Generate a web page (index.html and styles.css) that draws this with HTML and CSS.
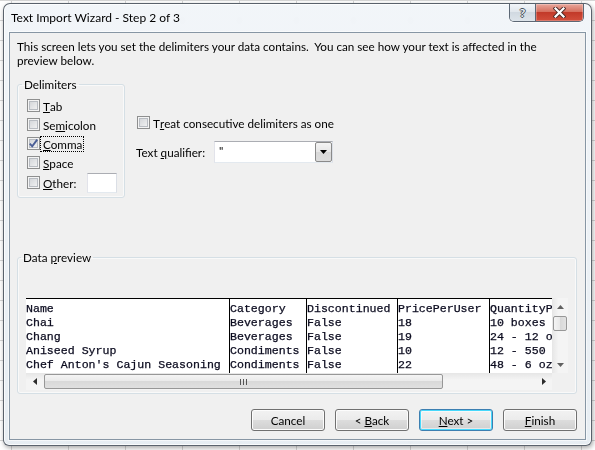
FILE: index.html
```html
<!DOCTYPE html>
<html lang="en">
<head>
  <meta charset="UTF-8" />
  <title>Text Import Wizard - Step 2 of 3</title>
  <link rel="stylesheet" href="styles.css">
</head>
<body>

  <!-- WINDOW -->
  <div class="window">
    <div class="titlebar">
      <span class="title">Text Import Wizard - Step 2 of 3</span>
      <div class="caption-btns">
        <button class="cap-help">?</button>
        <button class="cap-close">
          <svg width="13" height="11" viewBox="0 0 13 11">
            <path d="M2.5 1.5 L10.5 9.5 M10.5 1.5 L2.5 9.5" stroke="#4b2a26" stroke-width="4" stroke-linecap="square"/>
            <path d="M2.5 1.5 L10.5 9.5 M10.5 1.5 L2.5 9.5" stroke="#fff" stroke-width="2.2" stroke-linecap="square"/>
          </svg>
        </button>
      </div>
    </div>

    <div class="client">
      <p class="intro">This screen lets you set the delimiters your data contains.&nbsp; You can see how your text is affected in the preview below.</p>

      <!-- OPTIONS -->
      <div class="options">
        <fieldset class="group delims">
          <legend>Delimiters</legend>
          <label class="check"><span class="box"></span><u>T</u>ab</label>
          <label class="check"><span class="box"></span>Se<u>m</u>icolon</label>
          <label class="check">
            <span class="box">
              <svg width="11" height="11" viewBox="0 0 11 11"><path d="M1.8 5.6 L4.2 8.3 L9.2 1.6" fill="none" stroke="#4a5e96" stroke-width="1.9"/></svg>
            </span>
            <span class="focus"><u>C</u>omma</span>
          </label>
          <label class="check"><span class="box"></span><u>S</u>pace</label>
          <label class="check other"><span class="box"></span><u>O</u>ther:<span class="textbox"></span></label>
        </fieldset>

        <div class="side">
          <label class="check treat"><span class="box"></span>T<u>r</u>eat consecutive delimiters as one</label>
          <div class="qualifier">
            <span class="qual-label">Text <u>q</u>ualifier:</span>
            <div class="combo">
              <span class="combo-val">"</span>
              <span class="combo-btn">
                <svg width="7" height="4" viewBox="0 0 7 4"><path d="M0 0 H7 L3.5 4 Z" fill="#000"/></svg>
              </span>
            </div>
          </div>
        </div>
      </div>

      <!-- DATA PREVIEW -->
      <fieldset class="group preview">
        <legend>Data <u>p</u>review</legend>
        <div class="grid-view">
          <div class="data">
            <div class="col col-name">Name
Chai
Chang
Aniseed Syrup
Chef Anton's Cajun Seasoning</div>
            <div class="col col-cat">Category
Beverages
Beverages
Condiments
Condiments</div>
            <div class="col col-disc">Discontinued
False
False
False
False</div>
            <div class="col col-price">PricePerUser
18
19
10
22</div>
            <div class="col col-qty">QuantityPerUnit
10 boxes x 20 bags
24 - 12 oz bottles
12 - 550 ml bottles
48 - 6 oz jars</div>
          </div>

          <div class="vscroll">
            <span class="arrow"><svg width="7" height="4" viewBox="0 0 7 4"><path d="M0 4 H7 L3.5 0 Z" fill="#606060"/></svg></span>
            <span class="thumb"></span>
            <span class="track"></span>
            <span class="arrow"><svg width="7" height="4" viewBox="0 0 7 4"><path d="M0 0 H7 L3.5 4 Z" fill="#606060"/></svg></span>
          </div>

          <div class="hscroll">
            <span class="arrow"><svg width="4" height="7" viewBox="0 0 4 7"><path d="M4 0 V7 L0 3.5 Z" fill="#2c2c2c"/></svg></span>
            <span class="thumb">
              <svg width="7" height="6" viewBox="0 0 7 6"><path d="M0.5 0 V6 M3.5 0 V6 M6.5 0 V6" stroke="#555" stroke-width="1"/></svg>
            </span>
            <span class="track"></span>
            <span class="arrow"><svg width="4" height="7" viewBox="0 0 4 7"><path d="M0 0 V7 L4 3.5 Z" fill="#2c2c2c"/></svg></span>
          </div>

          <div class="corner"></div>
        </div>
      </fieldset>

      <!-- BUTTONS -->
      <div class="buttons">
        <button class="btn">Cancel</button>
        <button class="btn">&lt; <u>B</u>ack</button>
        <button class="btn default"><u>N</u>ext &gt;</button>
        <button class="btn"><u>F</u>inish</button>
      </div>
    </div>
  </div>

</body>
</html>
```

FILE: styles.css
```css
/* ===== Reset ===== */
*, *::before, *::after { box-sizing:border-box; }
body {
  margin:0; padding:3px;
  width:595px; height:450px; overflow:hidden;
  font-family:Lato, 'Liberation Sans', sans-serif; font-size:11.7px; color:#000;
  background-color:#fff;
  background-image:
    linear-gradient(90deg, #d6d6d6 1px, transparent 1px),
    linear-gradient(#d6d6d6 1px, transparent 1px);
  background-size:57px 20px;
  background-position:11px 0;
}
button { font:inherit; color:inherit; }
u { text-underline-offset:1px; }

/* ===== Window frame ===== */
.window {
  width:589px; height:443px;
  display:flex; flex-direction:column;
  padding:0 5px 5px;
  border:1px solid rgba(40,50,62,.75);
  border-radius:7px 7px 6px 6px;
  background:linear-gradient(rgba(240,244,248,.88), rgba(228,235,241,.88));
  backdrop-filter:blur(3px);
  box-shadow:inset 0 0 0 1px rgba(255,255,255,.75), 1px 2px 5px rgba(0,0,0,.35);
}
.titlebar { height:28px; display:flex; align-items:flex-start; padding-left:2px; flex:none; }
.title { padding-top:6px; line-height:15px; font-size:12px; }

.caption-btns {
  margin-left:auto; margin-right:2px;
  display:flex; height:18px;
  border:1px solid #5d6875; border-top:none;
  border-radius:0 0 5px 5px; overflow:hidden;
  box-shadow:0 1px 0 rgba(255,255,255,.7);
}
.caption-btns button {
  border:none; padding:0; height:100%;
  display:flex; align-items:center; justify-content:center;
}
.cap-help {
  width:26px;
  background:linear-gradient(#f2f5f8, #dfe5eb 50%, #d1d9e1 50%, #dde4ea);
  border-right:1px solid #5d6875 !important;
  font-weight:bold; font-size:12px; color:#eef1f4;
  text-shadow:1px 0 #47515c, -1px 0 #47515c, 0 1px #47515c, 0 -1px #47515c;
}
.cap-close {
  width:47px;
  background:linear-gradient(#e9a89c, #d6705f 45%, #c23a29 50%, #d24e3b);
  box-shadow:inset 0 0 0 1px rgba(255,255,255,.25);
}

/* ===== Client area ===== */
.client {
  flex:1;
  display:flex; flex-direction:column;
  background:#f0f0f0;
  border:1px solid #8796a4;
  box-shadow:0 0 0 1px rgba(255,255,255,.6);
}
.intro { margin:0; padding:6px 30px 0 7px; line-height:14px; }

/* ===== Group boxes ===== */
.group {
  margin:0;
  border:1px solid #d5dfe5; border-radius:3px;
  box-shadow:inset 0 0 0 1px rgba(255,255,255,.6);
  min-width:0;
}
.group legend { padding:0 2px; margin-left:-5px; line-height:16px; }

.options { display:flex; margin-top:9px; }
.delims { margin-left:7px; width:108px; padding:4px 7px 4px 9px; }

/* checkboxes */
.check { display:flex; align-items:center; height:19px; white-space:nowrap; }
.box {
  width:13px; height:13px; flex:none; margin-right:3px;
  display:flex; align-items:center; justify-content:center;
  border:1px solid #8e8f8f;
  background:linear-gradient(135deg, #cdd0d4, #f7f7f7);
  box-shadow:inset 0 0 0 1px #f4f4f4, inset 0 0 0 2px #b8bcc2;
}
.focus { outline:1px dotted #000; margin-left:-2px; padding:0 1px 0 2px; line-height:14px; }
.other { height:21px; }
.textbox {
  margin-left:auto; width:30px; height:20px;
  background:#fff;
  border:1px solid; border-color:#abadb3 #dbdfe6 #e3e9ef #e2e3ea;
}

.side { margin-left:11px; padding-top:38px; }
.treat { height:17px; padding-left:1px; }
.qualifier { display:flex; align-items:center; margin-top:10px; height:22px; }
.qual-label { width:78px; }
.combo {
  width:119px; height:22px;
  display:flex; align-items:stretch;
  background:#fff;
  border:1px solid; border-color:#abadb3 #dbdfe6 #e3e9ef #e2e3ea;
}
.combo-val { padding-left:4px; line-height:16px; }
.combo-btn {
  margin-left:auto; width:17px;
  display:flex; align-items:center; justify-content:center;
  border:1px solid #8a8a8a; border-radius:2px;
  background:linear-gradient(#f4f4f4, #e6e6e6 50%, #d8d8d8 50%, #dcdcdc);
}

/* ===== Data preview ===== */
.preview { margin:51px 8px 0 7px; padding:33px 8px 3px 8px; }
.grid-view {
  display:grid;
  grid-template-columns:526px 16px;
  grid-template-rows:75px 17px;
}
.data {
  display:flex; overflow:hidden;
  background:#fff; border-top:1px solid #000;
}
.col {
  flex:none; overflow:hidden;
  padding-top:3px;
  white-space:pre;
  font-family:'Liberation Mono', 'Courier New', monospace; font-size:11.6px; line-height:14px;
  color:#0a0a1e;
  -webkit-text-stroke:0.25px #0a0a1e;
}
.col + .col { border-left:1px solid #000; }
.col-name { width:203px; }
.col-cat { width:77px; }
.col-disc { width:91px; }
.col-price { width:92px; }
.col-qty { flex:1; }

.arrow { display:flex; align-items:center; justify-content:center; flex:none; }
.vscroll {
  display:flex; flex-direction:column;
  background:linear-gradient(90deg, #e6e6e6, #f4f4f4 40%, #f4f4f4);
}
.vscroll .arrow { height:17px; }
.vscroll .thumb {
  margin:1px 1px 0; height:15px;
  border:1px solid #979797; border-radius:2px;
  background:linear-gradient(90deg, #f4f4f4, #e8e8e8 50%, #d8d8d8 50%, #e2e2e2);
}
.vscroll .track { flex:1; }

.hscroll {
  display:flex;
  background:linear-gradient(#e6e6e6, #f4f4f4 40%, #f4f4f4);
}
.hscroll .arrow { width:17px; }
.hscroll .thumb {
  margin:1px 0 1px 1px; width:399px;
  display:flex; align-items:center; justify-content:center;
  border:1px solid #979797; border-radius:2px;
  background:linear-gradient(#f4f4f4, #e9e9e9 50%, #d9d9d9 50%, #e0e0e0);
}
.hscroll .track { flex:1; }
.corner { background:#f0f0f0; }

/* ===== Buttons ===== */
.buttons { display:flex; justify-content:flex-end; gap:10px; margin-top:15px; padding-right:8px; }
.btn {
  width:74px; height:22px; padding:0;
  border:1px solid #707070; border-radius:3px;
  background:linear-gradient(#f2f2f2, #ebebeb 50%, #dddddd 50%, #cfcfcf);
  box-shadow:inset 0 0 0 1px #fcfcfc;
}
.btn.default {
  border-color:#3c7fb1;
  box-shadow:inset 0 0 0 1px #48d8fb, inset 0 0 0 2px rgba(255,255,255,.5);
}
```
